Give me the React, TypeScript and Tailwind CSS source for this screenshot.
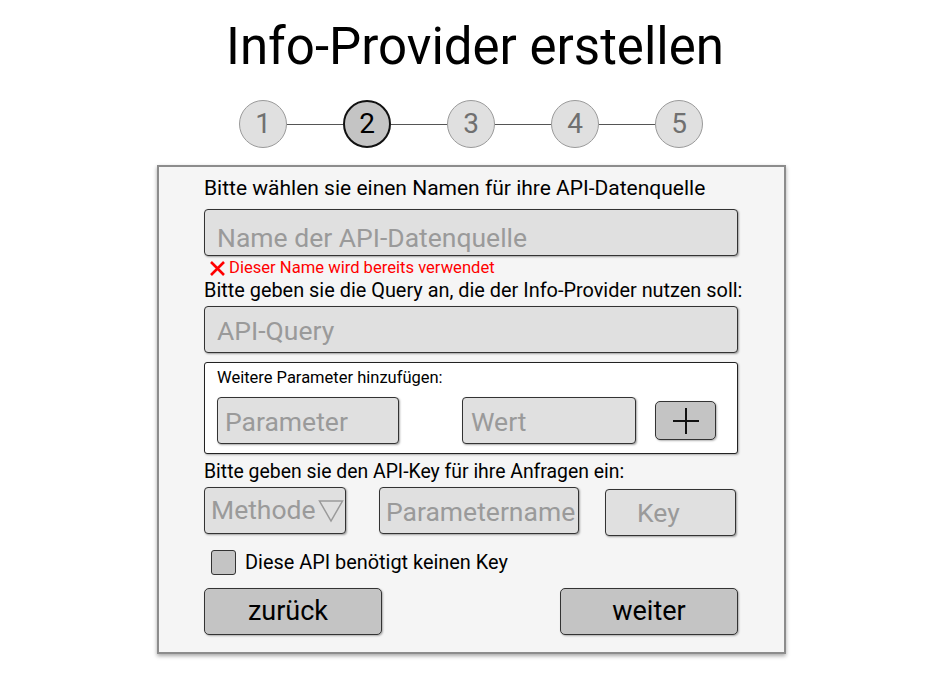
import React from "react";

const inputCls =
  "flex items-center bg-[#e0e0e0] border-[1.5px] border-[#333333] rounded-[4px] shadow-[1px_1px_2px_rgba(0,0,0,0.35)] text-[#9a9a9a] text-[26.5px] leading-none whitespace-nowrap overflow-hidden";

function Step({ n, active }: { n: number; active?: boolean }) {
  return (
    <div
      className={
        active
          ? "w-[48px] h-[48px] rounded-full bg-[#c4c4c4] border-2 border-[#111111] flex items-center justify-center text-[28px] leading-none text-black shrink-0"
          : "w-[48px] h-[48px] rounded-full bg-[#e0e0e0] border border-[#9a9a9a] flex items-center justify-center text-[28px] leading-none text-[#707070] shrink-0"
      }
    >
      {n}
    </div>
  );
}

function Line() {
  return <div className="w-[56px] h-px bg-[#555555] shrink-0" />;
}

export default function App() {
  return (
    <div
      className="w-[950px] h-[677px] bg-white text-black overflow-hidden"
      style={{ fontFamily: "Roboto, 'Noto Sans', sans-serif" }}
    >
      <h1 className="pt-[21px] text-center text-[51px] leading-none font-normal">
        Info-Provider erstellen
      </h1>

      <div className="mt-[28px] ml-[239px] flex items-center">
        <Step n={1} />
        <Line />
        <Step n={2} active />
        <Line />
        <Step n={3} />
        <Line />
        <Step n={4} />
        <Line />
        <Step n={5} />
      </div>

      <div className="mt-[17px] ml-[157px] w-[629px] h-[489px] bg-[#f5f5f5] border-2 border-[#8c8c8c] shadow-[0_2px_4px_rgba(0,0,0,0.35)]">
        <div className="w-[534px] ml-[45px] flex flex-col">
          <div className="mt-[9px] h-[24px] flex items-center text-[21px] leading-none whitespace-nowrap">
            Bitte wählen sie einen Namen für ihre API-Datenquelle
          </div>
          <div className={`${inputCls} mt-[9px] h-[47px] pl-[12px] pt-[12px]`}>
            Name der API-Datenquelle
          </div>
          <div className="mt-[2px] h-[20px] flex items-center pl-[5px] text-[16.6px] leading-none text-[#ff0000] whitespace-nowrap">
            <svg width="17" height="15" viewBox="0 0 17 15" className="mr-[3px] shrink-0">
              <path d="M2 1 L15 14 M15 1 L2 14" stroke="#ff0000" strokeWidth="2.6" fill="none" />
            </svg>
            Dieser Name wird bereits verwendet
          </div>
          <div className="mt-[1px] h-[24px] flex items-center text-[19.9px] leading-none whitespace-nowrap">
            Bitte geben sie die Query an, die der Info-Provider nutzen soll:
          </div>
          <div className={`${inputCls} mt-[3px] h-[47px] pl-[12px] pt-[3px]`}>API-Query</div>

          <div className="mt-[9px] h-[92px] bg-white border-[1.5px] border-[#222222] rounded-[3px] shadow-[1px_1px_2px_rgba(0,0,0,0.3)] flex flex-col pl-[12px]">
            <div className="mt-[5px] h-[20px] flex items-center text-[16.5px] leading-none whitespace-nowrap">
              Weitere Parameter hinzufügen:
            </div>
            <div className="mt-[9px] flex items-center">
              <div className={`${inputCls} w-[182px] h-[47px] pl-[7px] pt-[3px]`}>Parameter</div>
              <div className={`${inputCls} ml-[63px] w-[174px] h-[47px] pl-[8px] pt-[3px]`}>Wert</div>
              <div className="ml-[19px] w-[61px] h-[39px] bg-[#c4c4c4] border-[1.5px] border-[#333333] rounded-[5px] shadow-[1px_1px_2px_rgba(0,0,0,0.3)] flex items-center justify-center">
                <svg width="28" height="28" viewBox="0 0 28 28">
                  <path d="M14 1 V27 M1 14 H27" stroke="#111111" strokeWidth="2" fill="none" />
                </svg>
              </div>
            </div>
          </div>

          <div className="mt-[6px] h-[24px] flex items-center text-[19.4px] leading-none whitespace-nowrap">
            Bitte geben sie den API-Key für ihre Anfragen ein:
          </div>
          <div className="mt-[3px] flex items-start">
            <div className={`${inputCls} w-[142px] h-[47px] pl-[6px]`}>
              Methode
              <svg width="26" height="24" viewBox="0 0 26 24" className="ml-[2px] shrink-0">
                <path d="M1.5 2 H24.5 L13 22 Z" stroke="#9a9a9a" strokeWidth="1.5" fill="none" strokeLinejoin="miter" />
              </svg>
            </div>
            <div className={`${inputCls} ml-[33px] w-[200px] h-[47px] pl-[6px] pt-[3px]`}>Parametername</div>
            <div className={`${inputCls} ml-[26px] mt-[2px] w-[131px] h-[47px] pl-[31px] pt-[2px]`}>Key</div>
          </div>

          <div className="mt-[14px] h-[25px] flex items-center">
            <div className="ml-[7px] w-[25px] h-[25px] bg-[#c4c4c4] border border-[#333333] rounded-[3px] shrink-0" />
            <span className="ml-[9px] text-[19.9px] leading-none whitespace-nowrap">
              Diese API benötigt keinen Key
            </span>
          </div>

          <div className="mt-[13px] flex justify-between">
            <div className="w-[178px] h-[47px] bg-[#c4c4c4] border-[1.5px] border-[#333333] rounded-[5px] shadow-[1px_1px_2px_rgba(0,0,0,0.3)] flex items-center justify-center text-[27px] leading-none pr-[10px]">
              zurück
            </div>
            <div className="w-[178px] h-[47px] bg-[#c4c4c4] border-[1.5px] border-[#333333] rounded-[5px] shadow-[1px_1px_2px_rgba(0,0,0,0.3)] flex items-center justify-center text-[27px] leading-none">
              weiter
            </div>
          </div>
        </div>
      </div>
    </div>
  );
}
